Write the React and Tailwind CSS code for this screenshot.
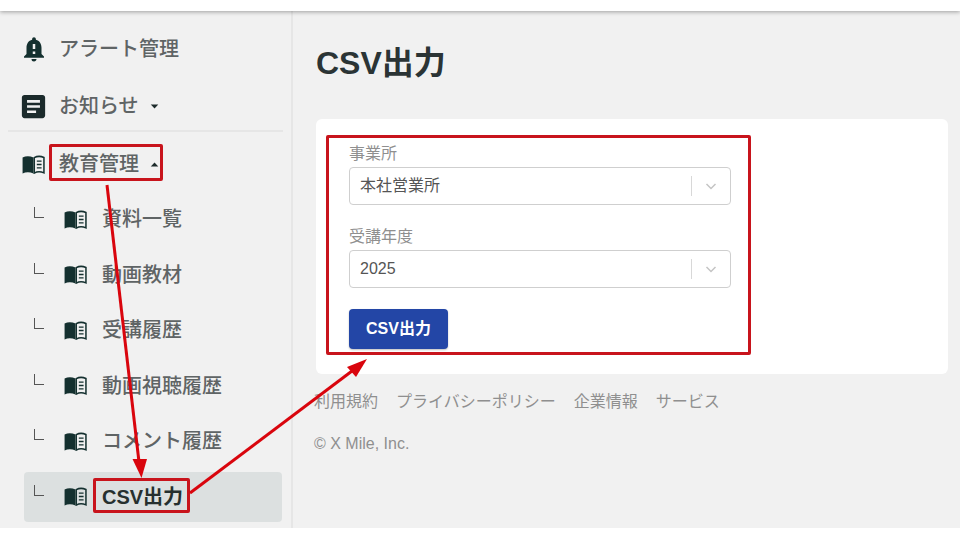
import React from "react";
import { MdNotificationImportant, MdArticle } from "react-icons/md";

const font = { fontFamily: '"Liberation Sans","Noto Sans CJK JP",sans-serif' };

function Book({ className = "" }) {
  return (
    <svg viewBox="0 0 24 20" className={className} fill="none">
      <path d="M0.5 2.5C4 0.8 8 0.8 12 2.5V19.5C8 17.8 4 17.8 0.5 19.5Z" fill="#14302f" />
      <path d="M12.8 2.8C15.5 1.3 20 1.3 23 2.6V18.8C20 17.6 15.5 17.6 12.8 19Z" stroke="#14302f" strokeWidth="1.6" />
      <path d="M15.5 6.5H20.5M15.5 10H20.5M15.5 13.5H20.5" stroke="#14302f" strokeWidth="1.4" />
    </svg>
  );
}

function Caret({ up }) {
  return (
    <svg viewBox="0 0 10 6" className="ml-[11px] h-[5px] w-[9px]">
      <path d={up ? "M0.5 5.5L5 0.5L9.5 5.5Z" : "M0.5 0.5L5 5.5L9.5 0.5Z"} fill="#1d2b2b" />
    </svg>
  );
}

function TopRow({ icon, label, caret, up, className = "" }) {
  return (
    <div className={`flex h-[28px] items-center pl-[21px] ${className}`}>
      <span className="flex w-[25px] justify-center">{icon}</span>
      <span className="ml-[13px] flex items-center text-[20px] leading-[28px] font-medium text-[#5f6465]">
        {label}
        {caret && <Caret up={up} />}
      </span>
    </div>
  );
}

function SubRow({ label, active }) {
  return (
    <div
      className={`ml-[24px] flex h-[50px] w-[258px] items-center rounded-[4px] pl-[10px] text-[20px] leading-[28px] ${
        active ? "bg-[#dce0e0] font-bold text-[#26302f]" : "font-medium text-[#5f6465]"
      }`}
    >
      <span className="-mt-[13px] h-[11px] w-[10px] border-b border-l border-[#555]" />
      <Book className="ml-[19px] h-[19px] w-[25px]" />
      <span className="ml-[14px]">{label}</span>
    </div>
  );
}

function Field({ label, value, className = "" }) {
  return (
    <div className={className}>
      <div className="mb-[1px] text-[16px] leading-[24px] text-[#8f8f8f]">{label}</div>
      <div className="flex h-[38px] w-[382px] items-center rounded-[4px] border border-[#cfcfcf] bg-white pl-[10px]">
        <span className="flex-1 text-[16px] text-[#555]">{value}</span>
        <span className="h-[20px] w-px bg-[#d8d8d8]" />
        <svg viewBox="0 0 20 20" className="mx-[9px] h-[20px] w-[20px]">
          <path d="M5.5 8L10 12.5L14.5 8" fill="none" stroke="#c4c4c4" strokeWidth="1.5" />
        </svg>
      </div>
    </div>
  );
}

function Box({ className }) {
  return <div className={`absolute rounded-[2px] border-[3px] border-[#c8141c] ${className}`} />;
}

export default function App() {
  const subs = ["資料一覧", "動画教材", "受講履歴", "動画視聴履歴", "コメント履歴"];
  return (
    <div className="relative h-[540px] w-[960px] overflow-hidden bg-white" style={font}>
      <div className="relative z-10 h-[11px] bg-white shadow-[0_1px_4px_rgba(0,0,0,0.35)]" />
      <div className="flex h-[517px] bg-[#f1f1f1]">
        <aside className="w-[293px] shrink-0 border-r-2 border-[#e6e6e6] pt-[24px]">
          <TopRow icon={<MdNotificationImportant className="h-[30px] w-[30px] shrink-0 text-[#14302f]" />} label="アラート管理" />
          <TopRow icon={<MdArticle className="h-[31px] w-[31px] shrink-0 text-[#1b2a2b]" />} label="お知らせ" caret className="mt-[29px]" />
          <div className="mt-[10px] ml-[8px] h-[2px] w-[275px] bg-[#e6e6e6]" />
          <TopRow icon={<Book className="h-[19px] w-[25px]" />} label="教育管理" caret up className="mt-[18px]" />
          <div className="mt-[16px] flex flex-col gap-[5.5px]">
            {subs.map((s) => (
              <SubRow key={s} label={s} />
            ))}
            <SubRow label="CSV出力" active />
          </div>
        </aside>
        <main className="min-w-0 flex-1 pr-[12px] pl-[23px]">
          <h1 className="mt-[29px] text-[32px] leading-[46px] font-bold text-[#2b3435]">CSV出力</h1>
          <section className="mt-[33px] h-[255px] rounded-[6px] bg-white pt-[23px] pl-[33px]">
            <Field label="事業所" value="本社営業所" />
            <Field label="受講年度" value="2025" className="mt-[20px]" />
            <button className="mt-[21px] h-[40px] w-[99px] rounded-[4px] bg-[#2346a6] text-[16px] font-bold text-white shadow-[0_1px_2px_rgba(0,0,0,0.25)]">
              CSV出力
            </button>
          </section>
          <div className="mt-[16px] -ml-[2px] flex gap-[18px] text-[16px] leading-[24px] text-[#8f8f8f]">
            <span>利用規約</span>
            <span>プライバシーポリシー</span>
            <span>企業情報</span>
            <span>サービス</span>
          </div>
          <div className="mt-[18px] -ml-[2px] text-[16px] leading-[24px] text-[#8f8f8f]">© X Mile, Inc.</div>
        </main>
      </div>

      <Box className="top-[144px] left-[49px] h-[37px] w-[114px]" />
      <Box className="top-[478px] left-[93px] h-[35px] w-[97px]" />
      <Box className="top-[135px] left-[326px] h-[220px] w-[425px]" />
      <svg className="pointer-events-none absolute inset-0 z-20" width="960" height="540" viewBox="0 0 960 540">
        <path d="M107 185L139 462" stroke="#d9050d" strokeWidth="3" />
        <path d="M132.5 459H147L141.5 478Z" fill="#d9050d" />
        <path d="M190 493L352 371" stroke="#d9050d" strokeWidth="3" />
        <path d="M367 359L347 367L356 377Z" fill="#d9050d" />
      </svg>
    </div>
  );
}
